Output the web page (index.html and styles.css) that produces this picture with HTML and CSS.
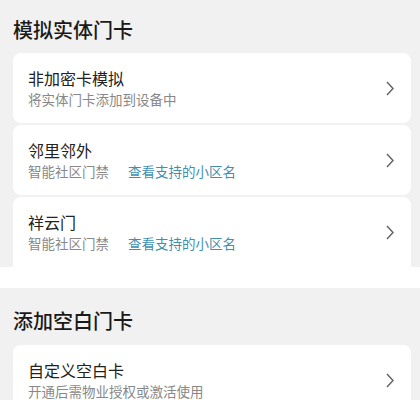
FILE: index.html
```html
<!DOCTYPE html>
<html lang="zh-CN">
<head>
<meta charset="utf-8">
<link rel="stylesheet" href="styles.css">
</head>
<body>
  <section class="section first">
    <h2 class="section-title">模拟实体门卡</h2>
    <div class="list">
      <div class="card">
        <div class="card-text">
          <div class="card-title">非加密卡模拟</div>
          <div class="card-sub">将实体门卡添加到设备中</div>
        </div>
        <svg class="chev" viewBox="0 0 8 15"><path d="M1 1 L7 7.5 L1 14" /></svg>
      </div>
      <div class="card">
        <div class="card-text">
          <div class="card-title">邻里邻外</div>
          <div class="card-sub">智能社区门禁<span class="link">查看支持的小区名</span></div>
        </div>
        <svg class="chev" viewBox="0 0 8 15"><path d="M1 1 L7 7.5 L1 14" /></svg>
      </div>
      <div class="card">
        <div class="card-text">
          <div class="card-title">祥云门</div>
          <div class="card-sub">智能社区门禁<span class="link">查看支持的小区名</span></div>
        </div>
        <svg class="chev" viewBox="0 0 8 15"><path d="M1 1 L7 7.5 L1 14" /></svg>
      </div>
    </div>
  </section>
  <div class="divider"></div>
  <section class="section second">
    <h2 class="section-title">添加空白门卡</h2>
    <div class="list">
      <div class="card">
        <div class="card-text">
          <div class="card-title">自定义空白卡</div>
          <div class="card-sub">开通后需物业授权或激活使用</div>
        </div>
        <svg class="chev" viewBox="0 0 8 15"><path d="M1 1 L7 7.5 L1 14" /></svg>
      </div>
    </div>
  </section>
</body>
</html>
```
FILE: styles.css
```css
* { box-sizing: border-box; }
html, body {
  margin: 0;
  padding: 0;
  background: #f1f1f1;
  font-family: "Noto Sans CJK SC", "Noto Sans", sans-serif;
  overflow: hidden;
}
.section {
  padding: 0 9px 0 13px;
  background: #f1f1f1;
}
.first { padding-top: 16px; }
.second { padding-top: 19px; }
.section-title {
  margin: 0;
  font-size: 20px;
  line-height: 28px;
  font-weight: 500;
  color: #1a1a1a;
}
.first .section-title { margin-bottom: 9px; }
.second .section-title { margin-bottom: 10px; }
.list {
  display: flex;
  flex-direction: column;
  gap: 2px;
}
.card {
  height: 70px;
  background: #fff;
  border-radius: 8px;
  display: flex;
  align-items: center;
  justify-content: space-between;
  padding: 0 17px 0 15px;
}
.first .list .card:last-child {
  border-radius: 8px 8px 0 0;
}
.card-text {
  display: flex;
  flex-direction: column;
}
.card-title {
  font-size: 16px;
  line-height: 22px;
  color: #222;
}
.card-sub {
  font-size: 13.5px;
  line-height: 20px;
  color: #888;
}
.link {
  color: #3f8fb0;
  margin-left: 19px;
}
.chev {
  width: 8px;
  height: 15px;
  fill: none;
  stroke: #666;
  stroke-width: 1.5;
}
.divider {
  height: 21px;
  background: #fff;
}
```
